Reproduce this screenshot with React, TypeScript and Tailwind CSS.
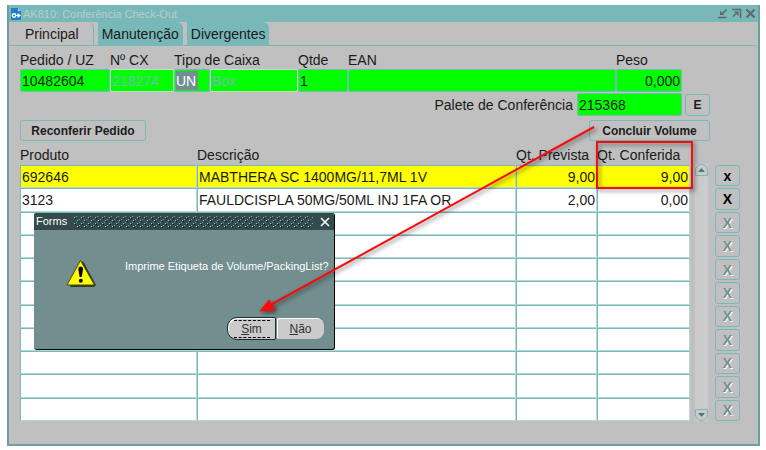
import { useState } from 'react';

type Row = {
  produto: string;
  descricao: string;
  prevista: string;
  conferida: string;
};

const items: Row[] = [
  { produto: '692646', descricao: 'MABTHERA SC 1400MG/11,7ML 1V', prevista: '9,00', conferida: '9,00' },
  { produto: '3123', descricao: 'FAULDCISPLA 50MG/50ML INJ 1FA OR', prevista: '2,00', conferida: '0,00' },
];

const ROWS = 11;
const tabs = ['Principal', 'Manutenção', 'Divergentes'];

const field = 'block w-full h-[23px] px-[1px] bg-[#00ff00] border rounded-[2px] outline-none';
const active = 'border-[#79b8b8] text-[#1a1a1a]';
const locked = 'border-[#c8dccc] text-[#79b8b8]';
const button = 'border border-[#79b8b8] rounded-[3px] bg-[#c0c0c0] font-bold text-xs text-[#1c1c1c]';
const cell = 'border border-[#79b8b8] border-b-[#b5d8d8] border-r-[#b5d8d8] px-[1px] py-0 leading-4';

function TitleBar() {
  return (
    <div className="flex items-center h-[17px] pl-[1px] pr-[2px] bg-[#79b8b8]">
      <svg width="12" height="14" viewBox="0 0 12 14" aria-hidden="true">
        <path d="M1 1h7l3 3v9H1z" fill="#1f7fc4" />
        <path d="M8 1l3 3H8z" fill="#a9d3ee" />
        <circle cx="4" cy="8.500" r="1.700" fill="none" stroke="#fff" strokeWidth="1.4" />
        <path d="M6 8h1.500V6L11 8.500 7.500 11V9H6z" fill="#fff" />
      </svg>
      <span className="flex-1 ml-[1px] text-[11px] leading-4 text-[#b9cccc]">AK810: Conferência Check-Out</span>
      <div className="flex gap-[3px] text-[#666666]">
        <button aria-label="Minimizar">
          <svg width="11" height="11" viewBox="0 0 11 11" fill="none" stroke="currentColor" strokeWidth="1.5">
            <path d="M1 9.500h8.500M9.500 1.500L5.500 5.500" />
            <path d="M3 2.500v4.500h4.500z" fill="currentColor" stroke="none" />
          </svg>
        </button>
        <button aria-label="Restaurar">
          <svg width="11" height="11" viewBox="0 0 11 11" fill="none" stroke="currentColor" strokeWidth="1.5">
            <path d="M1 1.500h8.500V10M2 8.500l3.500-3.500" />
            <path d="M3 3.500h4.500V8z" fill="currentColor" stroke="none" />
          </svg>
        </button>
        <button aria-label="Fechar">
          <svg width="11" height="11" viewBox="0 0 11 11" fill="none" stroke="currentColor" strokeWidth="2">
            <path d="M1.500 1.500l8 8M9.500 1.500l-8 8" />
          </svg>
        </button>
      </div>
    </div>
  );
}

function Header() {
  return (
    <div className="mr-[28px] grid grid-cols-[90px_64px_36px_88px_50px_1fr_66px] leading-[18px]">
      <label htmlFor="pedido">Pedido / UZ</label>
      <label htmlFor="cx">Nº CX</label>
      <label htmlFor="tipo" className="col-span-2">Tipo de Caixa</label>
      <label htmlFor="qtde">Qtde</label>
      <label htmlFor="ean">EAN</label>
      <label htmlFor="peso">Peso</label>

      <input id="pedido" className={`${field} ${active}`} defaultValue="10482604" />
      <input id="cx" className={`${field} ${locked}`} defaultValue="218274" readOnly />
      <div className="h-[23px] px-[1px] py-[1px] bg-[#00ff00] border border-[#79b8b8] rounded-[2px]">
        <input id="tipo" className="block w-[22px] h-[19px] bg-[#728e8e] text-white outline-none" defaultValue="UN" />
      </div>
      <input aria-label="Descrição da caixa" className={`${field} ${locked}`} defaultValue="Box" readOnly />
      <input id="qtde" className={`${field} ${active}`} defaultValue="1" />
      <input id="ean" className={`${field} ${active}`} />
      <input id="peso" className={`${field} ${active} text-right`} defaultValue="0,000" />
    </div>
  );
}

function Items() {
  const rows = Array.from({ length: ROWS }, (_, i) => items[i]);

  return (
    <div className="flex">
      <table className="flex-1 table-fixed border-separate border-spacing-0 h-[276px]">
        <colgroup>
          <col className="w-[177px]" />
          <col />
          <col className="w-[81px]" />
          <col className="w-[93px]" />
        </colgroup>
        <thead>
          <tr className="h-5 text-left leading-4">
            <th className="p-0 font-normal">Produto</th>
            <th className="p-0 font-normal">Descrição</th>
            <th className="p-0 font-normal whitespace-nowrap">Qt. Prevista</th>
            <th className="p-0 font-normal">Qt. Conferida</th>
          </tr>
        </thead>
        <tbody>
          {rows.map((row, i) => (
            <tr key={i} className={`h-[23px] ${i === 0 ? 'bg-[#ffff00]' : 'bg-white'}`}>
              <td className={cell}>{row?.produto}</td>
              <td className={cell}>{row?.descricao}</td>
              <td className={`${cell} text-right`}>{row?.prevista}</td>
              <td className={`${cell} text-right`}>{row?.conferida}</td>
            </tr>
          ))}
        </tbody>
      </table>

      {/* Полоса прокрутки */}
      <div className="flex flex-col justify-between w-[13px] mt-[19px] ml-[5px] bg-[#cbcbcb]">
        <button aria-label="Subir" className="flex items-center justify-center h-3 border border-[#79b8b8] rounded-t-full">
          <svg width="7" height="4" viewBox="0 0 7 4"><path d="M0 4l3.500-4L7 4z" fill="#4f7676" /></svg>
        </button>
        <button aria-label="Descer" className="flex items-center justify-center h-3 border border-[#79b8b8] rounded-b-full">
          <svg width="7" height="4" viewBox="0 0 7 4"><path d="M0 0h7L3.500 4z" fill="#4f7676" /></svg>
        </button>
      </div>

      <div className="flex flex-col gap-[2px] w-[25px] mt-[20px] ml-[7px]">
        {rows.map((row, i) => (
          <button
            key={i}
            disabled={!row}
            aria-label={`Excluir linha ${i + 1}`}
            className={`flex-1 border border-[#79b8b8] rounded-[3px] font-bold text-sm leading-4 ${row ? 'text-black' : 'text-[#728e8e] [text-shadow:1px_1px_0_#ffffff]'}`}
          >
            {i === 0 ? 'x' : 'X'}
          </button>
        ))}
      </div>
    </div>
  );
}

function FormsDialog() {
  return (
    <div
      role="dialog"
      aria-label="Forms"
      className="absolute left-[34px] top-[213px] w-[301px] h-[137px] flex flex-col bg-[#728e8e] border-r border-b border-black rounded-[3px] text-[11px] text-white"
    >
      <div className="flex items-center h-[17px] px-[2px] bg-[#344a4c] rounded-t-[2px]">
        <span>Forms</span>
        <svg className="flex-1 h-3 mx-[7px]" aria-hidden="true">
          <defs>
            <pattern id="grip" width="7" height="6" patternUnits="userSpaceOnUse">
              <path d="M0 1h1v1H0zM3 4h1v1H3z" fill="#8fd0d0" />
              <path d="M2 0h1v1H2zM5 3h1v1H5z" fill="#6aa5a5" />
              <path d="M1 2h1v1H1zM4 5h1v1H4z" fill="#0a1414" />
            </pattern>
          </defs>
          <rect width="100%" height="12" fill="url(#grip)" />
        </svg>
        <button aria-label="Fechar aviso" className="mr-[2px]">
          <svg width="10" height="10" viewBox="0 0 10 10" stroke="#fff" strokeWidth="1.5">
            <path d="M1 1l8 8M9 1l-8 8" />
          </svg>
        </button>
      </div>
      <div className="flex-1 flex items-start pt-7 pl-8">
        <svg width="31" height="30" viewBox="0 0 31 30" aria-hidden="true">
          <path d="M17 3l13 24-2 2H4z" fill="#2e3b2c" />
          <path d="M14.500 2.500L1 27h27.500z" fill="#ffff00" stroke="#4a4a10" strokeWidth="1" strokeLinejoin="round" />
          <path d="M12.300 11q0-2.500 2.400-2.500t2.400 2.500l-1.400 8h-2.100z" fill="#000" />
          <circle cx="14.800" cy="22.800" r="2" fill="#000" />
        </svg>
        <p className="ml-7 whitespace-nowrap leading-4">Imprime Etiqueta de Volume/PackingList?</p>
      </div>
      <div className="flex justify-end items-center pr-[10px] pb-[9px] text-xs text-[#333333]">
        <button className="w-[49px] h-[23px] flex items-center justify-center bg-[#cbcbcb] border border-[#1c2c2c] rounded-l-[10px] rounded-r-[2px] shadow-[inset_1px_1px_0_#ffffff]">
          <span className="w-9 h-[18px] leading-4 border-y border-dashed border-black"><u>S</u>im</span>
        </button>
        <button className="w-[47px] h-[21px] ml-[1px] bg-[#cbcbcb] rounded-r-[8px] rounded-l-[2px] shadow-[inset_1px_1px_0_#ffffff]">
          <u>N</u>ão
        </button>
      </div>
    </div>
  );
}

function Annotation() {
  return (
    <svg className="absolute left-0 top-0 pointer-events-none" width="766" height="450" viewBox="0 0 766 450" aria-hidden="true">
      <g fill="none" stroke="#fa0a0a" className="drop-shadow-[2px_2px_2px_rgba(0,0,0,0.5)]">
        <path d="M594 127L272 304" strokeWidth="2" />
        <path d="M260 311l9-11 6 10z" fill="#fa0a0a" strokeWidth="1" />
        <rect x="597" y="142" width="95" height="46" strokeWidth="2" />
      </g>
    </svg>
  );
}

export default function App() {
  const [tab, setTab] = useState(tabs[0]);

  return (
    <div className="relative min-h-screen bg-white pt-[5px] pl-[7px] pr-[6px] pb-[5px] text-sm text-[#1a1a1a] font-['Liberation_Sans',Arial,sans-serif]">
      <div className="bg-[#c0c0c0] border-x-2 border-b-2 border-[#6f9e9e]">
        <TitleBar />

        <nav className="flex gap-1 h-[23px]">
          {tabs.map((name) => (
            <button
              key={name}
              onClick={() => setTab(name)}
              className={`rounded-tr-[6px] ${name === tab ? 'pl-4 pr-[14px] bg-[#c0c0c0] border-r border-[#79b8b8]' : 'px-1 bg-[#79b8b8]'}`}
            >
              {name}
            </button>
          ))}
        </nav>

        <main className="pt-[5px] pl-[11px] pr-[18px] pb-[23px] border-t border-[#79b8b8] rounded-tr-[4px]">
          <div className="pr-[30px]">
            <Header />

            <div className="flex justify-end items-center mt-[1px] leading-4">
              <label htmlFor="palete" className="mr-1">Palete de Conferência</label>
              <div className="w-[105px]">
                <input id="palete" className={`${field} ${active}`} defaultValue="215368" />
              </div>
              <button className={`${button} w-[25px] h-[22px] ml-[3px]`}>E</button>
            </div>

            <div className="flex justify-between mt-1">
              <button className={`${button} w-[126px] h-[21px]`}>Reconferir Pedido</button>
              <button className={`${button} w-[121px] h-[21px]`}>Concluir Volume</button>
            </div>
          </div>

          <div className="mt-1">
            <Items />
          </div>
        </main>
      </div>

      <FormsDialog />
      <Annotation />
    </div>
  );
}
